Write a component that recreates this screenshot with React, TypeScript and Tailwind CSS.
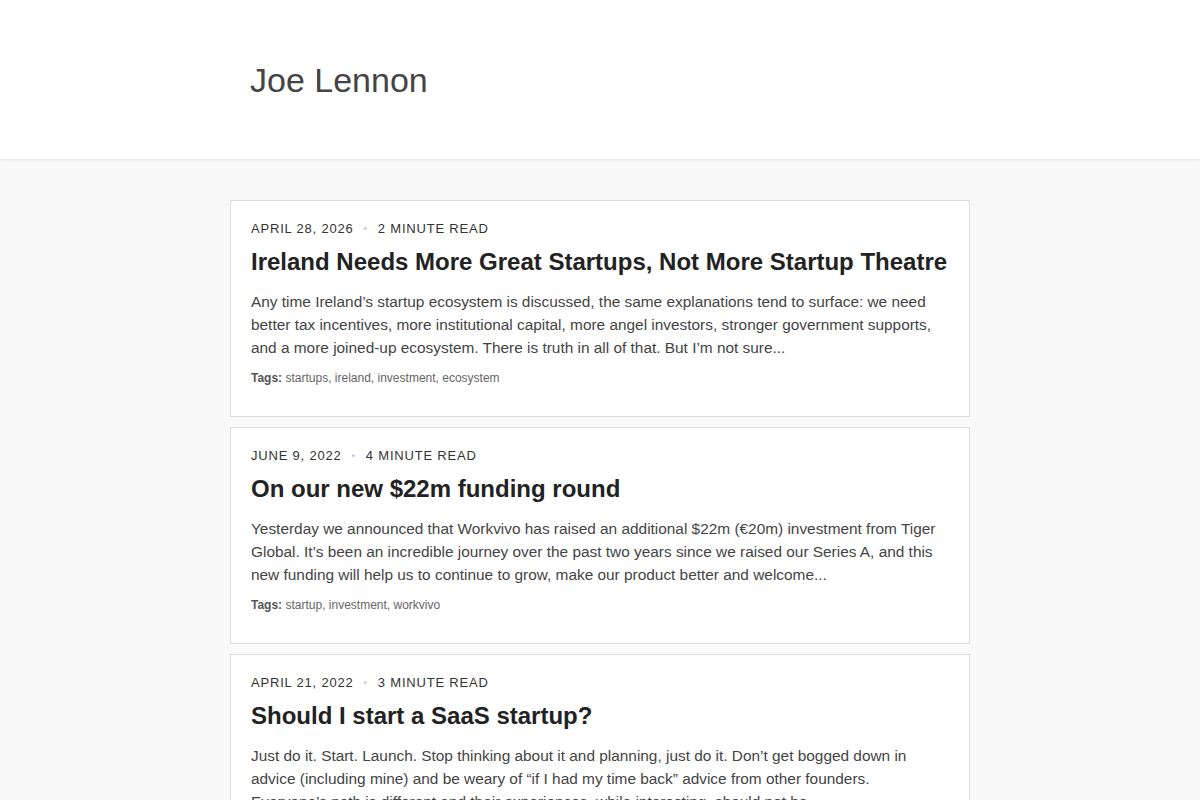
const posts = [
  {
    date: "April 28, 2026",
    read: "2 minute read",
    title: "Ireland Needs More Great Startups, Not More Startup Theatre",
    excerpt:
      "Any time Ireland’s startup ecosystem is discussed, the same explanations tend to surface: we need better tax incentives, more institutional capital, more angel investors, stronger government supports, and a more joined-up ecosystem. There is truth in all of that. But I’m not sure...",
    tags: ["startups", "ireland", "investment", "ecosystem"],
  },
  {
    date: "June 9, 2022",
    read: "4 minute read",
    title: "On our new $22m funding round",
    excerpt:
      "Yesterday we announced that Workvivo has raised an additional $22m (€20m) investment from Tiger Global. It’s been an incredible journey over the past two years since we raised our Series A, and this new funding will help us to continue to grow, make our product better and welcome...",
    tags: ["startup", "investment", "workvivo"],
  },
  {
    date: "April 21, 2022",
    read: "3 minute read",
    title: "Should I start a SaaS startup?",
    excerpt:
      "Just do it. Start. Launch. Stop thinking about it and planning, just do it. Don’t get bogged down in advice (including mine) and be weary of “if I had my time back” advice from other founders. Everyone’s path is different and their experiences, while interesting, should not be...",
    tags: ["startup", "saas", "advice"],
  },
];

export default function App() {
  return (
    <div className="min-h-screen bg-[#f9f9f9] font-['Liberation_Sans',Arial,sans-serif]">
      <header className="h-[160px] bg-white border-b border-[#ececec] shadow-[0_1px_3px_rgba(0,0,0,0.04)]">
        <div className="w-[740px] mx-auto px-5 h-full flex items-center">
          <h1 className="text-[34px] leading-none text-[#444]">Joe Lennon</h1>
        </div>
      </header>

      <main className="w-[740px] mx-auto pt-10 flex flex-col gap-[10px]">
        {posts.map((p) => (
          <article
            key={p.title}
            className="bg-white border border-[#dcdcdc] px-5 pt-[19px] pb-[30px]"
          >
            <div className="flex items-center text-[13px] leading-[18px] uppercase tracking-[0.8px] text-[#333]">
              <span>{p.date}</span>
              <span className="mx-[10px] text-[#ccc] text-[10px]">•</span>
              <span>{p.read}</span>
            </div>
            <h2 className="mt-[9px] text-[24px] leading-[30px] font-bold text-[#222]">
              {p.title}
            </h2>
            <p className="mt-[13px] text-[15.4px] leading-[23px] text-[#444]">{p.excerpt}</p>
            <div className="mt-[11px] text-[12px] leading-[16px] text-[#666]">
              <span className="font-bold text-[#555]">Tags:</span>{" "}
              {p.tags.map((t, i) => (
                <span key={t}>
                  {t}
                  {i < p.tags.length - 1 ? ", " : ""}
                </span>
              ))}
            </div>
          </article>
        ))}
      </main>
    </div>
  );
}
